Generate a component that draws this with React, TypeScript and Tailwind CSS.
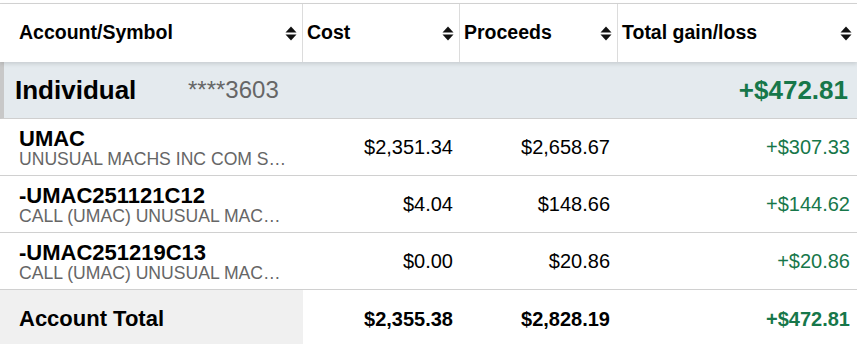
import React from "react";

interface Position {
  symbol: string;
  description: string;
  cost: string;
  proceeds: string;
  gain: string;
}

const positions: Position[] = [
  {
    symbol: "UMAC",
    description: "UNUSUAL MACHS INC COM SHS NEW",
    cost: "$2,351.34",
    proceeds: "$2,658.67",
    gain: "+$307.33",
  },
  {
    symbol: "-UMAC251121C12",
    description: "CALL (UMAC) UNUSUAL MACHS INC NOV 21 25 $12",
    cost: "$4.04",
    proceeds: "$148.66",
    gain: "+$144.62",
  },
  {
    symbol: "-UMAC251219C13",
    description: "CALL (UMAC) UNUSUAL MACHS INC DEC 19 25 $13",
    cost: "$0.00",
    proceeds: "$20.86",
    gain: "+$20.86",
  },
];

const cols = "grid grid-cols-[303px_157px_158px_1fr]";

function SortIcon() {
  return (
    <svg width="12" height="15" viewBox="0 0 12 15" className="shrink-0">
      <path d="M6 0.5 L11.5 6.5 L0.5 6.5 Z" fill="#111" />
      <path d="M0.5 8.5 L11.5 8.5 L6 14.5 Z" fill="#111" />
    </svg>
  );
}

function HeaderCell({ label, first, last }: { label: string; first?: boolean; last?: boolean }) {
  return (
    <div
      className={`flex items-center justify-between h-[58px] pr-[5px] ${first ? "pl-[19px]" : "pl-[4px]"} ${
        last ? "" : "border-r border-[#dcdcdc]"
      }`}
    >
      <span className="text-[19.5px] font-bold text-black">{label}</span>
      <SortIcon />
    </div>
  );
}

export default function App() {
  return (
    <div className="w-[857px] h-[344px] overflow-hidden bg-white font-['Liberation_Sans',Arial,sans-serif] text-black">
      <div className="mt-[3px] border-t border-[#d4d4d4]">
        {/* header */}
        <div className={`${cols} relative z-10 bg-white shadow-[0_2px_4px_rgba(0,0,0,0.12)]`}>
          <HeaderCell label="Account/Symbol" first />
          <HeaderCell label="Cost" />
          <HeaderCell label="Proceeds" />
          <HeaderCell label="Total gain/loss" last />
        </div>

        {/* account row */}
        <div className="flex items-center h-[57px] bg-[#e4eaee] border-l-4 border-[#c8c8c8] border-b border-b-[#cfcfcf] pl-[11px] pr-[9px]">
          <span className="text-[26px] font-bold leading-none w-[173px]">Individual</span>
          <span className="text-[24px] text-[#666] leading-none">****3603</span>
          <span className="ml-auto text-[26px] font-bold text-[#17774a] leading-none">+$472.81</span>
        </div>

        {positions.map((p) => (
          <div key={p.symbol} className={`${cols} h-[57px] border-b border-[#d0d0d0] items-center`}>
            <div className="pl-[19px] pr-[13px] min-w-0 pt-[2px]">
              <div className="text-[22px] font-bold leading-[23px]">{p.symbol}</div>
              <div className="text-[17.6px] text-[#666] leading-[19px] truncate">{p.description}</div>
            </div>
            <div className="text-right text-[20px] pr-[7px]">{p.cost}</div>
            <div className="text-right text-[20px] pr-[8px]">{p.proceeds}</div>
            <div className="text-right text-[20px] pr-[7px] text-[#17774a]">{p.gain}</div>
          </div>
        ))}

        {/* total */}
        <div className={`${cols} h-[57px] items-stretch`}>
          <div className="flex items-center bg-[#f0f0f0] pl-[19px] text-[22px] font-bold">Account Total</div>
          <div className="flex items-center justify-end text-[20px] font-bold pr-[7px]">$2,355.38</div>
          <div className="flex items-center justify-end text-[20px] font-bold pr-[8px]">$2,828.19</div>
          <div className="flex items-center justify-end text-[20px] font-bold pr-[7px] text-[#17774a]">+$472.81</div>
        </div>
      </div>
    </div>
  );
}
